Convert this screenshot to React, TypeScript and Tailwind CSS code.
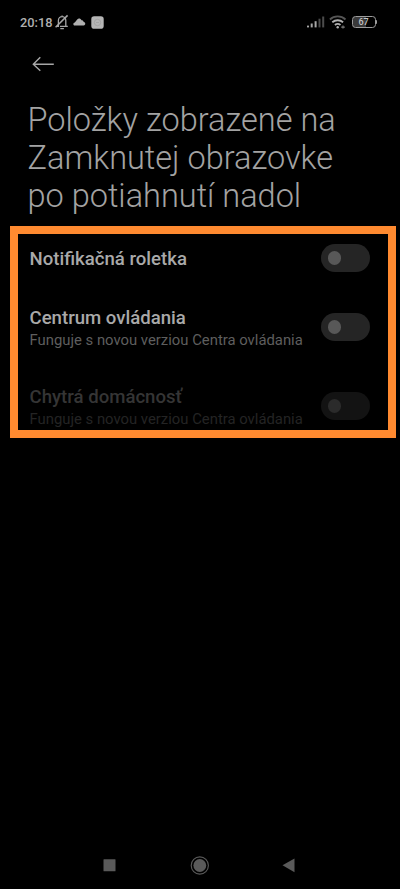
import React, { useState } from 'react';

const ITEMS = [
  { id: 'notifications', title: 'Notifikačná roletka', summary: '', disabled: false },
  { id: 'control', title: 'Centrum ovládania', summary: 'Funguje s novou verziou Centra ovládania', disabled: false },
  { id: 'home', title: 'Chytrá domácnosť', summary: 'Funguje s novou verziou Centra ovládania', disabled: true },
];

const StatusBar = () => (
  <div className="flex h-11 items-center pl-5 pr-[23px]">
    <span className="w-[33px] pt-px text-[12.8px] font-medium leading-4 whitespace-nowrap text-[#b0b0b0]">20:18</span>
    {/* Muted bell */}
    <svg width="14" height="16" viewBox="0 0 14 16" className="ml-[2px] shrink-0" fill="none" stroke="#a6a6a6" strokeWidth="1.3">
      <path d="M1.6 12.3h1.8V6.4a3.7 3.7 0 0 1 7.4 0v5.9M5 12.3h7.8M7.1 2.8V1.4M5.3 14.6h3.6" />
      <path d="M12.6 1.4.6 13.2" strokeWidth="1.5" />
    </svg>
    <svg width="13" height="8" viewBox="0 0 13 8" className="ml-[4px] shrink-0" fill="#b0b0b0">
      <path d="M1.6 7.4C-.1 7.4 0 4.8 1.8 4.5L4.2 1.5C5.5 0 7.7.5 8.5 2.2c1.2 0 1.9.6 2.2 1.9 2.1.2 2.1 3.3 0 3.3z" />
    </svg>
    <svg width="13" height="13" viewBox="0 0 13 13" className="ml-[5px] shrink-0">
      <rect x=".3" y=".3" width="12.4" height="12.4" rx="2.8" fill="#b5b5b5" />
      <circle cx="6.5" cy="6.5" r="3.2" fill="none" stroke="#a0a0a0" strokeWidth=".8" />
      <path d="M5 6.5h3" stroke="#a0a0a0" strokeWidth=".8" />
    </svg>

    <div className="ml-auto flex items-center">
      <svg width="18" height="12" viewBox="0 0 18 12">
        <g fill="#a6a6a6">
          <rect x="0" y="9.6" width="2" height="1.8" />
          <rect x="3.7" y="7.5" width="2" height="3.9" />
          <rect x="7.6" y="5.2" width="2" height="6.2" />
        </g>
        <g fill="#4b4b4b">
          <rect x="11.5" y="2.7" width="2" height="8.7" />
          <rect x="15.2" y=".5" width="2" height="10.9" />
        </g>
      </svg>
      <svg width="18" height="14" viewBox="0 0 18 14" className="ml-[4px]" fill="none" strokeWidth="1.8">
        <path d="M.9 4.5a11.4 11.4 0 0 1 15.6 0" stroke="#555" />
        <path d="M3.3 7.3a8.2 8.2 0 0 1 10.8 0M5.9 10a4.4 4.4 0 0 1 5.6 0" stroke="#b0b0b0" />
        <circle cx="8.7" cy="12.3" r="1.2" fill="#b0b0b0" />
        <path d="M12.2 12.2h3.6M14 10.6v2.8" stroke="#777" strokeWidth="1.2" />
      </svg>
      <div className="ml-[5px] flex items-center">
        <div className="flex h-3 w-[24px] items-center justify-center rounded-[3.5px] border-[1.4px] border-[#9c9c9c] bg-linear-to-r from-[#3a3a3a] from-60% to-black to-60% text-[9px] font-medium leading-none text-[#c4c4c4]">
          67
        </div>
        <div className="h-1 w-[1.5px] rounded-r-sm bg-[#9c9c9c]" />
      </div>
    </div>
  </div>
);

interface ToggleProps {
  checked: boolean;
  disabled: boolean;
  label: string;
  onChange: () => void;
}

const Toggle = ({ checked, disabled, label, onChange }: ToggleProps) => (
  <button
    role="switch"
    aria-checked={checked}
    aria-label={label}
    disabled={disabled}
    onClick={onChange}
    className={`flex h-[27.5px] w-[49.5px] shrink-0 items-center rounded-full px-[7px] ${checked ? 'justify-end' : 'justify-start'} ${disabled ? 'bg-[#131313]' : 'bg-[#252525]'}`}
  >
    <span className={`h-[13.5px] w-[13.5px] rounded-full ${disabled ? 'bg-[#2b2b2b]' : 'bg-[#585858]'}`} />
  </button>
);

const App = () => {
  const [enabled, setEnabled] = useState<Record<string, boolean>>({});

  const toggle = (id: string) => setEnabled((prev) => ({ ...prev, [id]: !prev[id] }));

  return (
    <div className="flex h-[889px] w-full flex-col overflow-hidden bg-black font-[Roboto,sans-serif]">
      <StatusBar />

      <header className="flex h-10 items-center pl-8">
        <button aria-label="Späť">
          <svg width="23" height="16" viewBox="0 0 23 16" fill="none" stroke="#a6a6a6" strokeWidth="1.4">
            <path d="M21.8 8.2H1.2M8.3 1.2l-7 7 7 6.6" />
          </svg>
        </button>
      </header>

      <h1 className="pl-[27.5px] pt-[17px] text-[32.5px] font-light leading-[38px] whitespace-nowrap text-[#a3a3a3]">
        Položky zobrazené na
        <br />
        Zamknutej obrazovke
        <br />
        po potiahnutí nadol
      </h1>

      <section className="ml-[9.5px] mt-[11px] flex h-[211.5px] w-[386px] flex-col border-8 border-[#ff8a30] pl-[12px] pr-[17.5px]">
        {ITEMS.map((item) => (
          <div
            key={item.id}
            className={`flex shrink-0 items-center justify-between ${item.summary ? 'h-[79px]' : 'mb-[6px] h-[47.5px]'}`}
          >
            <div className={item.summary ? 'pt-px' : 'pt-[2px]'}>
              <p className={`text-[18.6px] font-medium leading-6 ${item.disabled ? 'text-[#353535]' : 'text-[#a9a9a9]'}`}>
                {item.title}
              </p>
              {item.summary && (
                <p className={`text-[14.85px] leading-5 whitespace-nowrap ${item.disabled ? 'text-[#242424]' : 'text-[#5e5e5e]'}`}>
                  {item.summary}
                </p>
              )}
            </div>
            <Toggle
              checked={!!enabled[item.id]}
              disabled={item.disabled}
              label={item.title}
              onChange={() => toggle(item.id)}
            />
          </div>
        ))}
      </section>

      {/* System navigation */}
      <nav className="mt-auto flex h-12 items-center justify-between pl-[103px] pr-[105px]">
        <svg width="13" height="13" viewBox="0 0 13 13" fill="#5a5a5a">
          <rect x=".5" y=".2" width="12" height="12" rx=".5" />
        </svg>
        <svg width="19" height="19" viewBox="0 0 19 19">
          <circle cx="9.8" cy="9.5" r="8.6" fill="none" stroke="#5a5a5a" strokeWidth="1.1" />
          <circle cx="9.8" cy="9.5" r="6.4" fill="#5a5a5a" />
        </svg>
        <svg width="13" height="15" viewBox="0 0 13 15" fill="#5a5a5a">
          <path d="M12.5.4v13.8L.5 7.3z" />
        </svg>
      </nav>
    </div>
  );
};

export default App;
